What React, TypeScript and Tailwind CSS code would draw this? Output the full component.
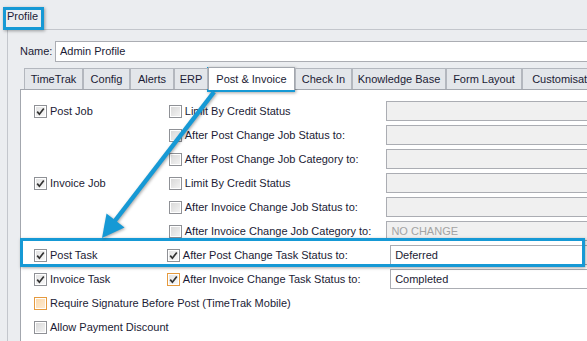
import React from "react";

type CbKind = "on" | "off" | "orangeOn" | "orangeOff";

function Check({ kind }: { kind: CbKind }) {
  const orange = kind === "orangeOn" || kind === "orangeOff";
  const checked = kind === "on" || kind === "orangeOn";
  return (
    <div
      className={
        "relative w-[13px] h-[13px] shrink-0 border " +
        (orange ? "border-[#e59a3e]" : "border-[#8f9196]")
      }
    >
      <div
        className={
          "absolute inset-[1px] " +
          (orange && !checked
            ? "bg-gradient-to-br from-[#fbd9ac] to-[#fdebd2]"
            : checked
            ? "bg-gradient-to-br from-[#e4e4e4] to-[#f7f7f7]"
            : "bg-gradient-to-br from-[#d9d9d9] to-[#f2f2f2]")
        }
      />
      {checked && (
        <svg className="absolute left-0 top-0" width="11" height="11" viewBox="0 0 11 11">
          <path d="M2.2 5.6 L4.4 8.2 L8.8 2.4" fill="none" stroke="#333" strokeWidth="1.7" />
        </svg>
      )}
    </div>
  );
}

function Field({ text, gray, white }: { text?: string; gray?: boolean; white?: boolean }) {
  return (
    <div
      className={
        "h-[20px] w-[260px] border border-[#abadb3] flex items-center pl-[4px] " +
        (white ? "bg-white" : "bg-[#f0f0f0]") +
        (gray ? " text-[#a3a3a3]" : "")
      }
    >
      {text}
    </div>
  );
}

type Row = {
  left?: { label: string; kind: CbKind };
  mid?: { label: string; kind: CbKind };
  field?: { text?: string; gray?: boolean; white?: boolean };
  wide?: boolean;
};

const rows: Row[] = [
  { left: { label: "Post Job", kind: "on" }, mid: { label: "Limit By Credit Status", kind: "off" }, field: {} },
  { mid: { label: "After Post Change Job Status to:", kind: "off" }, field: {} },
  { mid: { label: "After Post Change Job Category to:", kind: "off" }, field: {} },
  { left: { label: "Invoice Job", kind: "on" }, mid: { label: "Limit By Credit Status", kind: "off" }, field: {} },
  { mid: { label: "After Invoice Change Job Status to:", kind: "off" }, field: {} },
  { mid: { label: "After Invoice Change Job Category to:", kind: "off" }, field: { text: "NO CHANGE", gray: true } },
  { left: { label: "Post Task", kind: "on" }, mid: { label: "After Post Change Task Status to:", kind: "on" }, field: { text: "Deferred", white: true }, wide: true },
  { left: { label: "Invoice Task", kind: "on" }, mid: { label: "After Invoice Change Task Status to:", kind: "orangeOn" }, field: { text: "Completed", white: true }, wide: true },
];

const tabs: { name: string; w: string; selected?: boolean }[] = [
  { name: "TimeTrak", w: "w-[59px]" },
  { name: "Config", w: "w-[47px]" },
  { name: "Alerts", w: "w-[44px]" },
  { name: "ERP", w: "w-[34px]" },
  { name: "Post & Invoice", w: "w-[87px]", selected: true },
  { name: "Check In", w: "w-[57px]" },
  { name: "Knowledge Base", w: "w-[94px]" },
  { name: "Form Layout", w: "w-[76px]" },
  { name: "Customisation", w: "w-[90px]" },
];

export default function App() {
  return (
    <div className="relative w-[587px] h-[341px] overflow-hidden bg-[#ebedf0] font-['Liberation_Sans',Arial,sans-serif] text-[11px] leading-none text-[#1b1b35]">
      {/* title */}
      <div className="h-[29px] flex items-center pl-[7px] pt-[4px]">Profile</div>

      {/* body */}
      <div className="ml-[7px] w-[640px] h-[312px] border-l border-t border-[#c3c6cc] pl-[12px] pt-[11px]">
        <div className="flex items-center h-[21px]">
          <div className="w-[35px]">Name:</div>
          <div className="h-[21px] flex-1 bg-white border border-[#abadb3] flex items-center pl-[4px]">
            Admin Profile
          </div>
        </div>

        {/* tabs */}
        <div className="mt-[6px] pl-[4px] flex items-end h-[21px] relative z-10">
          {tabs.map((t) =>
            t.selected ? (
              <div
                key={t.name}
                className={t.w + " h-[23px] -mb-px bg-white border-l border-t border-r border-[#a3a7ae] flex items-center justify-center"}
              >
                {t.name}
              </div>
            ) : (
              <div
                key={t.name}
                className={t.w + " h-[21px] bg-[#e3e6ea] border-l border-t border-r border-[#b3b7be] flex items-center justify-center pt-px"}
              >
                {t.name}
              </div>
            )
          )}
        </div>

        {/* panel */}
        <div className="bg-white border border-[#a3a7ae] h-[260px] pl-[13px] pt-[9px]">
          {rows.map((r, i) => (
            <div key={i} className="flex items-center h-[24px]">
              <div className="w-[135px] flex items-center gap-[3px]">
                {r.left && (
                  <>
                    <Check kind={r.left.kind} />
                    <span>{r.left.label}</span>
                  </>
                )}
              </div>
              <div className={(r.wide ? "w-[227px]" : "w-[218px]") + " flex items-center gap-[3px]"}>
                {r.mid && (
                  <>
                    <Check kind={r.mid.kind} />
                    <span>{r.mid.label}</span>
                  </>
                )}
              </div>
              {r.field && <Field {...r.field} />}
            </div>
          ))}
          <div className="flex items-center h-[24px] gap-[3px]">
            <Check kind="orangeOff" />
            <span>Require Signature Before Post (TimeTrak Mobile)</span>
          </div>
          <div className="flex items-center h-[24px] gap-[3px]">
            <Check kind="off" />
            <span>Allow Payment Discount</span>
          </div>
        </div>
      </div>

      {/* highlight overlays */}
      <div className="absolute left-[3px] top-[7px] w-[41px] h-[23px] border-[3px] border-[#1699d5] shadow-[1px_1px_3px_rgba(0,0,0,0.35)]" />
      <div className="absolute left-[207px] top-[67px] w-[88px] h-[25px] border-[3px] border-[#1699d5] shadow-[1px_1px_3px_rgba(0,0,0,0.35)]" />
      <div className="absolute left-[20px] top-[238px] w-[565px] h-[29px] border-[3px] border-[#1699d5] shadow-[1px_1px_3px_rgba(0,0,0,0.35)]" />

      <svg
        className="absolute left-0 top-0 pointer-events-none"
        width="587"
        height="341"
        viewBox="0 0 587 341"
        style={{ filter: "drop-shadow(1px 1px 1.5px rgba(0,0,0,0.35))" }}
      >
        <line x1="214" y1="92" x2="114" y2="222" stroke="#1699d5" strokeWidth="4.5" />
        <polygon points="102,238 124.5,227.5 106.5,213.5" fill="#1699d5" />
      </svg>
    </div>
  );
}
